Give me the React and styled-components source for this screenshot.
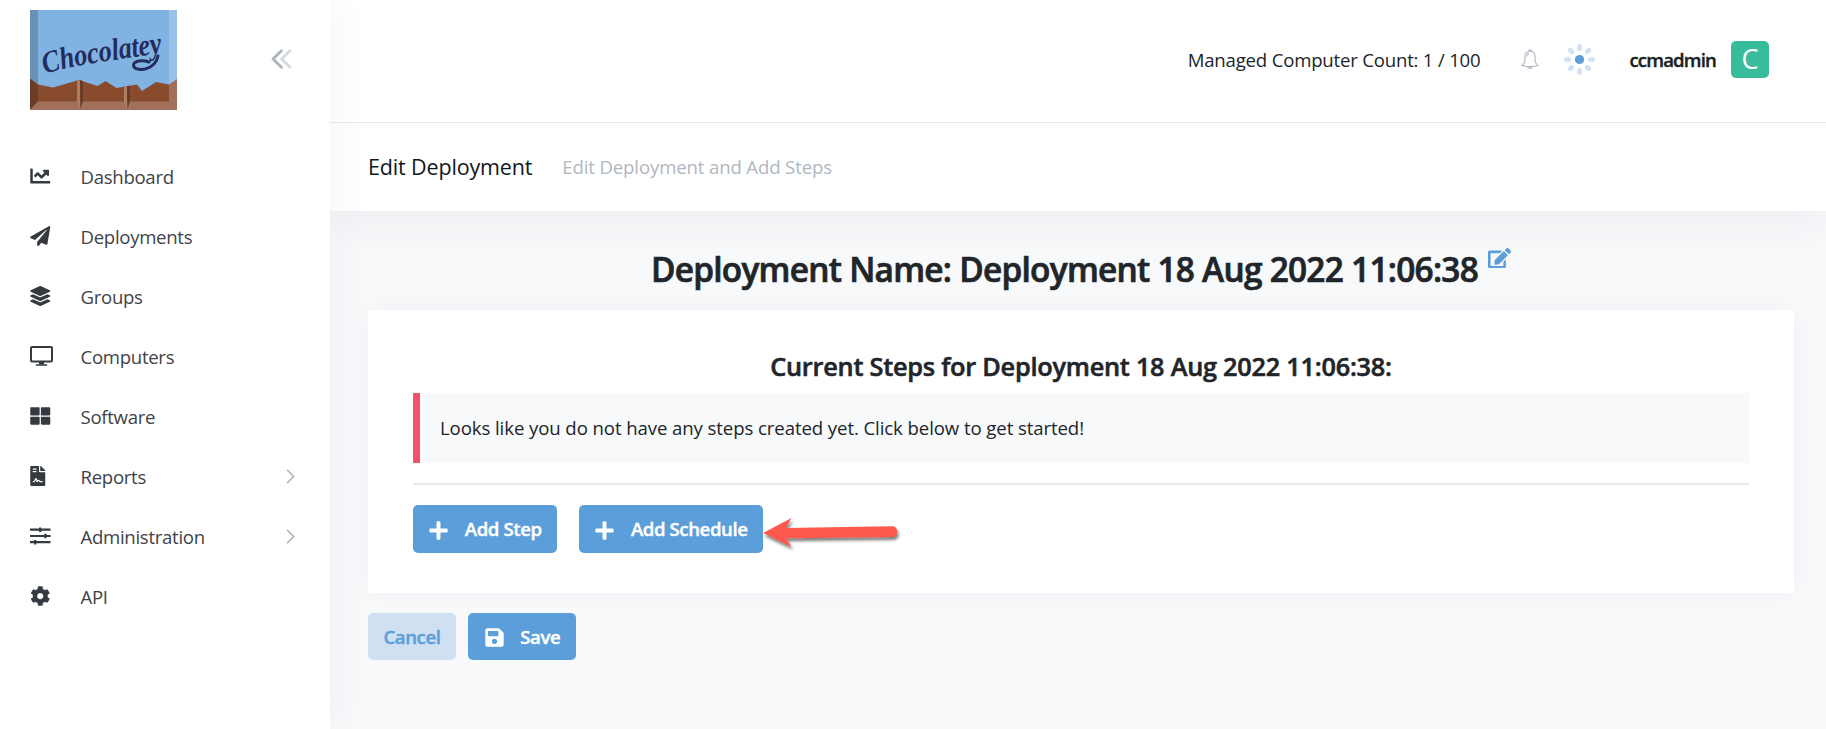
import React from 'react';
import styled, { createGlobalStyle } from 'styled-components';
import {
  FaChartLine,
  FaPaperPlane,
  FaLayerGroup,
  FaThLarge,
  FaFileContract,
  FaCog,
  FaPlus,
  FaSave,
  FaEdit,
} from 'react-icons/fa';

const GlobalStyle = createGlobalStyle`
  *, *::before, *::after { box-sizing: border-box; }
  body {
    margin: 0;
    background: #f7f9fb;
    color: #212529;
    font-family: "Open Sans", "Noto Sans", sans-serif;
    font-size: 18.6px;
    overflow: hidden;
  }
  h1, h2, h3, p { margin: 0; }
  svg { display: block; flex: none; }
`;

const Page = styled.div`
  display: flex;
  width: 1826px;
  height: 729px;
  overflow: hidden;
`;

/* Sidebar */

const Sidebar = styled.aside`
  width: 330px;
  flex: none;
  background: #fff;
  box-shadow: 0 0 42px rgba(62, 60, 70, 0.05);
  z-index: 2;
`;

const Brand = styled.div`
  display: flex;
  align-items: flex-start;
  justify-content: space-between;
  height: 146px;
  padding: 10px 38px 0 30px;
`;

const Collapse = styled.button`
  margin: 39px 0 0;
  padding: 0;
  border: 0;
  background: none;
`;

const NavItem = styled.a`
  display: flex;
  align-items: center;
  height: 60px;
  padding: 0 35px 0 30px;
  color: #3f4349;
`;

const NavIcon = styled.span`
  display: flex;
  width: 50.5px;
  color: #343a40;
  svg {
    width: ${(p) => p.$w || 20.5}px;
    height: 20px;
  }
`;

const NavLabel = styled.span`
  flex: 1;
  letter-spacing: -0.3px;
`;

/* Top bar */

const Main = styled.main`
  flex: 1;
  display: flex;
  flex-direction: column;
`;

const TopBar = styled.header`
  display: flex;
  align-items: center;
  justify-content: flex-end;
  height: 123px;
  padding: 0 57px 4px 0;
  background: #fff;
  border-bottom: 1px solid #e8e9ec;
  z-index: 1;
`;

const Count = styled.span`
  color: #212529;
  margin-right: 40.5px;
  padding-top: 1px;
  letter-spacing: -0.2px;
`;

const UserName = styled.span`
  margin: 0 15px 0 34.5px;
  padding-top: 1px;
  color: #1b1f24;
  font-weight: 600;
  letter-spacing: -0.85px;
  -webkit-text-stroke: 0.4px currentColor;
`;

const Avatar = styled.span`
  display: flex;
  align-items: center;
  justify-content: center;
  width: 38px;
  height: 37px;
  border-radius: 5px;
  background: #38bc9b;
  color: #fff;
  font-size: 27px;
  line-height: 36px;
`;

const SubHeader = styled.div`
  display: flex;
  align-items: baseline;
  gap: 30px;
  height: 88px;
  padding: 28px 38px 0;
  background: #fff;
  box-shadow: 0 12px 42px rgba(55, 55, 62, 0.06);
`;

const PageTitle = styled.h3`
  color: #0f1722;
  font-size: 21.5px;
  line-height: 32px;
  font-weight: 400;
  letter-spacing: -0.15px;
`;

const PageHint = styled.span`
  position: relative;
  top: -1px;
  color: #b0b7c0;
  letter-spacing: -0.14px;
`;

/* Content */

const Content = styled.section`
  flex: 1;
  padding: 37px 32px 0 38px;
  z-index: 1;
`;

const Title = styled.h1`
  display: flex;
  justify-content: center;
  gap: 10px;
  margin-bottom: 20px;
  font-size: 33.4px;
  line-height: 42px;
  font-weight: 600;
  letter-spacing: -0.73px;
  -webkit-text-stroke: 0.7px currentColor;
`;

const EditLink = styled.a`
  color: #5c9ed9;
  svg {
    width: 23px;
    height: 20.5px;
    margin-top: -0.5px;
  }
`;

const Card = styled.div`
  padding: 40px 45px;
  background: #fff;
  box-shadow: 0 0 20px rgba(62, 60, 70, 0.04);
`;

const CardTitle = styled.h2`
  margin-bottom: 11px;
  font-size: 25.3px;
  line-height: 32px;
  font-weight: 600;
  letter-spacing: -0.24px;
  text-align: center;
  -webkit-text-stroke: 0.55px currentColor;
`;

const Callout = styled.p`
  height: 70px;
  padding-left: 20px;
  border-left: 7px solid #f4516c;
  background: #f7f9fb;
  line-height: 70px;
  letter-spacing: -0.09px;
`;

const Rule = styled.div`
  height: 2px;
  margin: 20px 0;
  background: #e6eaee;
`;

const ButtonRow = styled.div`
  position: relative;
  display: flex;
  gap: ${(p) => p.$gap}px;
  margin-top: ${(p) => p.$top || 0}px;
`;

const Button = styled.button`
  display: flex;
  align-items: center;
  justify-content: center;
  gap: 15.5px;
  width: ${(p) => p.$w}px;
  height: ${(p) => p.$h || 48}px;
  padding: 0 0 1px;
  border: 0;
  border-radius: 5px;
  background: ${(p) => (p.$soft ? '#cee0f2' : '#5c9ed9')};
  color: ${(p) => (p.$soft ? '#5c9ed9' : '#fff')};
  font-family: inherit;
  font-size: 18.6px;
  font-weight: 600;
  letter-spacing: -0.4px;
  white-space: nowrap;
  -webkit-text-stroke: 0.4px currentColor;
  svg {
    position: relative;
    top: 1.5px;
  }
`;

const Pointer = styled.svg`
  position: absolute;
  left: 344.5px;
  top: 5.5px;
`;

/* Drawings */

const Logo = () => (
  <svg width="147" height="100" viewBox="0 0 147 100">
    <rect width="147" height="100" fill="#80b3e1" />
    <rect width="8" height="100" fill="#6b91b6" />
    <rect x="139" width="8" height="100" fill="#98c2e9" />
    <path d="M8 74.5 23 77.5 49 70 67.5 76 75.5 71 86.5 78 107 74.5 112 81 126 72 139 74.5V92H8Z" fill="#884b2e" />
    <path d="M0 68.5 8 74.5V92L0 100Z" fill="#6b3d27" />
    <path d="M139 74.5 147 69V100H0L8 91.5H139Z" fill="#a1705a" />
    <path d="M47 70.6 50 70V100L47 91Z" fill="#ae7d66" />
    <path d="M50 70 53 71.2V91L50.5 99Z" fill="#673a25" />
    <path d="M94 76.8 97 76.2V100L94 91Z" fill="#ae7d66" />
    <path d="M97 76.2 100 75.7V91L97.5 99Z" fill="#673a25" />
    <path id="wordmark-line" d="M15 64 C46 54 88 50 137 42" fill="none" />
    <text
      fill="#242c5e"
      fontFamily='"Liberation Serif", serif'
      fontStyle="italic"
      fontWeight="700"
      fontSize="31"
    >
      <textPath href="#wordmark-line" textLength="120" lengthAdjust="spacingAndGlyphs">
        Chocolatey
      </textPath>
    </text>
    <path d="M128 46C125 60 108 62 104 57C101 52 110 49 119 52" fill="none" stroke="#242c5e" strokeWidth="3" strokeLinecap="round" />
  </svg>
);

const DoubleChevron = () => (
  <svg width="21" height="20" viewBox="0 0 21 20" fill="none" strokeWidth="2.8" strokeLinecap="round" strokeLinejoin="round">
    <path d="M19 1.8 10.6 10 19 18.2" stroke="#d5d8df" />
    <path d="M10.4 1.8 2 10 10.4 18.2" stroke="#abb4bd" />
  </svg>
);

const Chevron = () => (
  <svg width="9" height="15" viewBox="0 0 9 15" fill="none" stroke="#abb4bd" strokeWidth="1.6">
    <path d="M1 .8 7.6 7.5 1 14.2" />
  </svg>
);

const Monitor = () => (
  <svg viewBox="0 0 23 20" fill="none" stroke="currentColor">
    <rect x="1" y="1" width="21" height="14.6" rx="1" strokeWidth="2" />
    <path d="M9 15.6h5v3H9z" fill="currentColor" stroke="none" />
    <path d="M6.4 19h10.2" strokeWidth="1.6" strokeLinecap="round" />
  </svg>
);

const Sliders = () => (
  <svg viewBox="0 0 20.5 20" fill="none" stroke="currentColor" strokeWidth="2.2">
    <path d="M0 3.7H20.5M0 10H20.5M0 16.2H20.5" />
    <path d="M10.2 1.4V6M15.4 7.7V12.3M5.2 13.9V18.5" strokeWidth="2.2" />
  </svg>
);

const Bell = () => (
  <svg width="18" height="20" viewBox="0 0 18 20" fill="none" stroke="#adb6c0" strokeWidth="1.1" strokeLinejoin="round">
    <path d="M9 2.2C5.7 2.2 4 4.4 4 7.4V11.4C4 13.6 2.6 14.8 1 16.3 3 17.2 6 17.6 9 17.6S15 17.2 17 16.3C15.4 14.8 14 13.6 14 11.4V7.4C14 4.4 12.3 2.2 9 2.2Z" />
    <path d="M7.5 2.2C7.5 .3 10.5 .3 10.5 2.2M6.8 17.8C7.6 19.9 10.4 19.9 11.2 17.8M6 7.6C6 5.7 6.8 4.7 8 4.3" />
  </svg>
);

const Sun = () => (
  <svg width="31" height="31" viewBox="-15.5 -15.5 31 31">
    <circle r="4.6" fill="#5c9ed9" />
    {[0, 45, 90, 135, 180, 225, 270, 315].map((a) => (
      <ellipse key={a} cx="12" rx="3.5" ry="2.5" fill="#cfe1f3" transform={`rotate(${a})`} />
    ))}
  </svg>
);

const SunSlot = styled.span`
  margin-left: 25px;
`;

const nav = [
  { label: 'Dashboard', icon: <FaChartLine /> },
  { label: 'Deployments', icon: <FaPaperPlane /> },
  { label: 'Groups', icon: <FaLayerGroup /> },
  { label: 'Computers', icon: <Monitor />, w: 23 },
  { label: 'Software', icon: <FaThLarge /> },
  { label: 'Reports', icon: <FaFileContract />, w: 15.5, open: true },
  { label: 'Administration', icon: <Sliders />, open: true },
  { label: 'API', icon: <FaCog /> },
];

export default function App() {
  return (
    <>
      <GlobalStyle />
      <Page>
        <Sidebar>
          <Brand>
            <Logo />
            <Collapse aria-label="Collapse menu">
              <DoubleChevron />
            </Collapse>
          </Brand>
          <nav>
            {nav.map((n) => (
              <NavItem key={n.label}>
                <NavIcon $w={n.w}>{n.icon}</NavIcon>
                <NavLabel>{n.label}</NavLabel>
                {n.open && <Chevron />}
              </NavItem>
            ))}
          </nav>
        </Sidebar>
        <Main>
          <TopBar>
            <Count>Managed Computer Count: 1 / 100</Count>
            <Bell />
            <SunSlot>
              <Sun />
            </SunSlot>
            <UserName>ccmadmin</UserName>
            <Avatar>C</Avatar>
          </TopBar>
          <SubHeader>
            <PageTitle>Edit Deployment</PageTitle>
            <PageHint>Edit Deployment and Add Steps</PageHint>
          </SubHeader>
          <Content>
            <Title>
              Deployment Name: Deployment 18 Aug 2022 11:06:38
              <EditLink aria-label="Edit name">
                <FaEdit />
              </EditLink>
            </Title>
            <Card>
              <CardTitle>Current Steps for Deployment 18 Aug 2022 11:06:38:</CardTitle>
              <Callout>
                Looks like you do not have any steps created yet. Click below to get started!
              </Callout>
              <Rule />
              <ButtonRow $gap={22}>
                <Button $w={144}>
                  <FaPlus size={21} />
                  Add Step
                </Button>
                <Button $w={184}>
                  <FaPlus size={21} />
                  Add Schedule
                </Button>
                <Pointer width="150" height="48" viewBox="0 0 150 48">
                  <defs>
                    <filter id="pointer-shadow" x="-10%" y="-20%" width="120%" height="160%">
                      <feDropShadow dx="1.5" dy="3" stdDeviation="1.8" floodColor="#000" floodOpacity="0.5" />
                    </filter>
                  </defs>
                  <path
                    d="M5 22 33.5 7 28 17 134 15.2C141 15.2 141 26 134 26L28 27.2 33.5 36Z"
                    fill="#fd594b"
                    filter="url(#pointer-shadow)"
                  />
                </Pointer>
              </ButtonRow>
            </Card>
            <ButtonRow $gap={12} $top={20}>
              <Button $w={88} $h={47} $soft>
                Cancel
              </Button>
              <Button $w={108} $h={47}>
                <FaSave size={21} />
                Save
              </Button>
            </ButtonRow>
          </Content>
        </Main>
      </Page>
    </>
  );
}
